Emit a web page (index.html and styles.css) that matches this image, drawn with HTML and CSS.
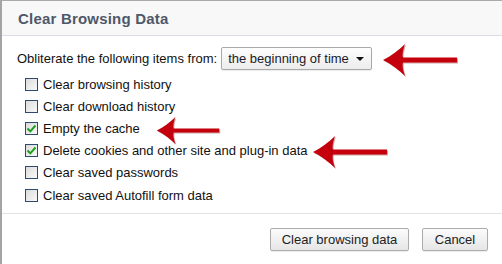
FILE: index.html
```html
<!DOCTYPE html>
<html lang="en">
<head>
  <meta charset="UTF-8">
  <title>Clear Browsing Data</title>
  <link rel="stylesheet" href="styles.css">
</head>
<body>

<div class="dialog">
  <div class="dialog-header">
    <h1>Clear Browsing Data</h1>
  </div>

  <div class="dialog-content">
    <div class="from-row">
      <span>Obliterate the following items from:</span>
      <div class="select">
        <span>the beginning of time</span>
        <span class="select-caret"></span>
      </div>
    </div>

    <ul class="options">
      <li><span class="check"></span>Clear browsing history</li>
      <li><span class="check"></span>Clear download history</li>
      <li><span class="check checked"><svg viewBox="0 0 11 11"><path d="M1.5 5.5 L4.3 8.3 L9.5 2.5" /></svg></span>Empty the cache</li>
      <li><span class="check checked"><svg viewBox="0 0 11 11"><path d="M1.5 5.5 L4.3 8.3 L9.5 2.5" /></svg></span>Delete cookies and other site and plug-in data</li>
      <li><span class="check"></span>Clear saved passwords</li>
      <li><span class="check"></span>Clear saved Autofill form data</li>
    </ul>
  </div>

  <div class="dialog-footer">
    <button class="btn btn-clear">Clear browsing data</button>
    <button class="btn btn-cancel">Cancel</button>
  </div>

  <!-- red annotation arrows -->
  <svg class="arrow arrow-select" viewBox="0 0 74 32"><path d="M0 16 C8 12 16 6 22 0 C20 6 19 11 20 13.5 L74 13.5 L74 18.5 L20 18.5 C19 21 20 26 22 32 C16 26 8 20 0 16 Z" /></svg>
  <svg class="arrow arrow-cache" viewBox="0 0 74 32"><path d="M0 16 C8 12 16 6 22 0 C20 6 19 11 20 13.5 L74 13.5 L74 18.5 L20 18.5 C19 21 20 26 22 32 C16 26 8 20 0 16 Z" /></svg>
  <svg class="arrow arrow-cookies" viewBox="0 0 74 32"><path d="M0 16 C8 12 16 6 22 0 C20 6 19 11 20 13.5 L74 13.5 L74 18.5 L20 18.5 C19 21 20 26 22 32 C16 26 8 20 0 16 Z" /></svg>
</div>

</body>
</html>
```

FILE: styles.css
```css
body {
  margin: 0;
  background: #fff;
  font-family: 'Liberation Sans', Arial, sans-serif;
  font-size: 13px;
  color: #111;
}

.dialog {
  position: relative;
  width: 500px;
  height: 263px;
  border-top: 1px solid #a9a9a9;
  border-left: 2px solid #a4a4a8;
  background: #fff;
}

.dialog-header {
  height: 34px;
  background: #f8f8f8;
  border-bottom: 1px solid #dcdce6;
  padding-left: 16px;
  display: flex;
  align-items: center;
}

.dialog-header h1 {
  margin: 0;
  font-size: 15px;
  font-weight: bold;
  color: #4f5868;
  letter-spacing: 0.2px;
}

.dialog-content {
  padding: 11px 0 0 15px;
  height: 166px;
}

.from-row {
  display: flex;
  align-items: center;
  gap: 4px;
}

.select {
  width: 151px;
  height: 23px;
  box-sizing: border-box;
  border: 1px solid #a9a9a9;
  border-radius: 2px;
  background: linear-gradient(#fefefe, #ececec);
  box-shadow: 0 1px 1px rgba(0,0,0,0.08);
  display: flex;
  align-items: center;
  justify-content: space-between;
  padding: 0 7px 0 6px;
  color: #1a1a2a;
}

.select-caret {
  width: 0;
  height: 0;
  border-left: 4px solid transparent;
  border-right: 4px solid transparent;
  border-top: 4px solid #111;
}

.options {
  list-style: none;
  margin: 3px 0 0 0;
  padding: 0 0 0 8px;
}

.options li {
  height: 22.2px;
  display: flex;
  align-items: center;
}

.check {
  width: 11px;
  height: 11px;
  border: 1px solid #2b4a6f;
  background: linear-gradient(135deg, #dcdcdc, #f8f8f8);
  margin-right: 5px;
  display: inline-flex;
}

.check svg {
  width: 11px;
  height: 11px;
  fill: none;
  stroke: #1ea01e;
  stroke-width: 2;
}

.dialog-footer {
  border-top: 1px solid #e2e2e2;
  padding: 14px 14px 0 0;
  display: flex;
  justify-content: flex-end;
  gap: 13px;
}

.btn {
  height: 23px;
  border: 1px solid #acacac;
  border-radius: 2px;
  background: linear-gradient(#fbfbfb, #e6e6e6);
  box-shadow: 0 1px 1px rgba(0,0,0,0.08);
  font-family: 'Liberation Sans', Arial, sans-serif;
  font-size: 13px;
  color: #222;
  padding: 0;
}

.btn-clear {
  width: 139px;
}

.btn-cancel {
  width: 66px;
}

.arrow {
  position: absolute;
  width: 74px;
  height: 32px;
  fill: #c4000c;
  filter: drop-shadow(1px 1px 0 rgba(120,0,0,0.35));
}

.arrow-select {
  left: 381px;
  top: 43px;
}

.arrow-cache {
  left: 150px;
  top: 116px;
  height: 27px;
  width: 72px;
}

.arrow-cookies {
  left: 311px;
  top: 135px;
}
```
